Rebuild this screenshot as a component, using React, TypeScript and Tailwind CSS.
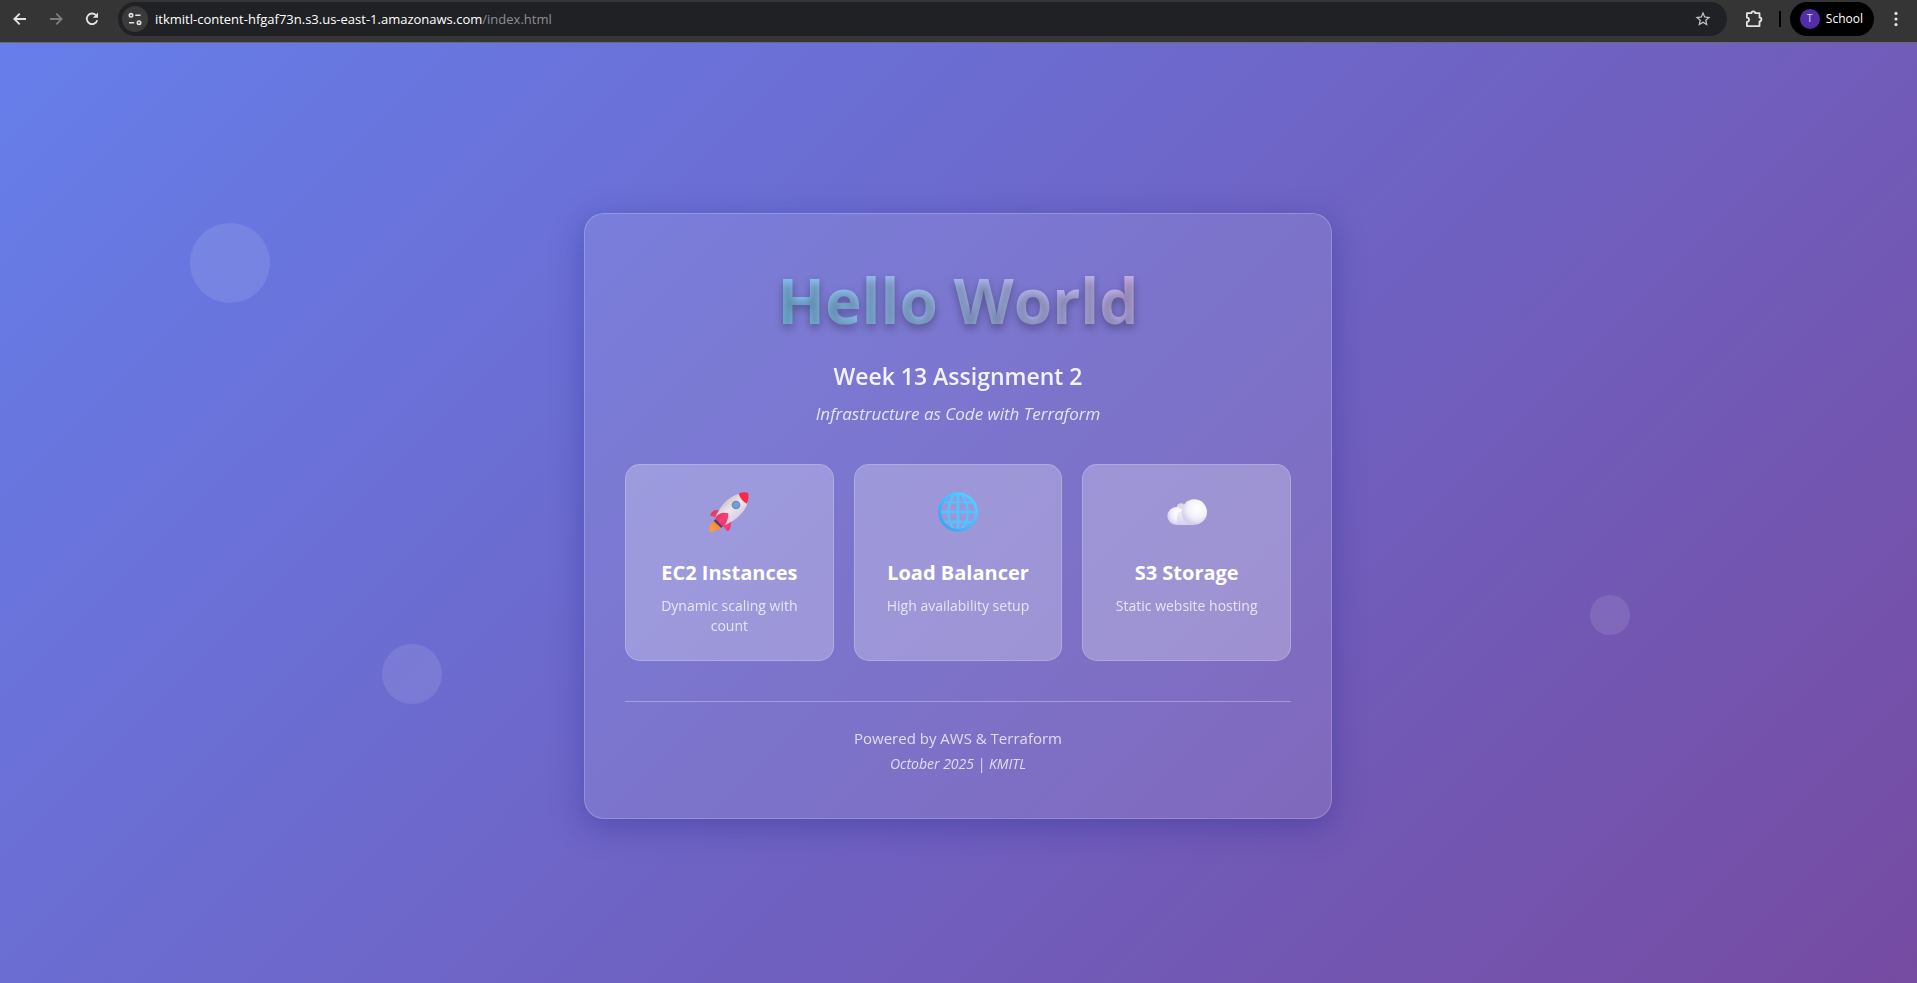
import React from 'react';

const uiFont = "font-['Open_Sans','Noto_Sans',sans-serif]";

function ArrowIcon({ flip = false }: { flip?: boolean }) {
  return (
    <svg viewBox="0 0 18 18" className="size-[18px]" fill="none" stroke="currentColor" strokeWidth="1.8">
      {flip ? <path d="M3 9h11.5M9.3 3.6 14.7 9l-5.4 5.4" /> : <path d="M15 9H3.5M8.7 3.6 3.3 9l5.4 5.4" />}
    </svg>
  );
}

function ReloadIcon() {
  return (
    <svg viewBox="0 0 18 18" className="size-[18px]">
      <path d="M14.2 10.2A5.3 5.3 0 1 1 12.9 5.1" fill="none" stroke="currentColor" strokeWidth="1.8" />
      <path d="M15 2.6v5.2H9.8z" fill="currentColor" />
    </svg>
  );
}

function TuneIcon() {
  return (
    <svg viewBox="0 0 16 16" className="size-4" fill="none" stroke="currentColor" strokeWidth="1.6">
      <circle cx="4" cy="4.3" r="1.7" />
      <path d="M8.3 4.3h5.2M2 11.7h5.2" />
      <circle cx="12" cy="11.7" r="1.7" />
    </svg>
  );
}

function StarIcon() {
  return (
    <svg viewBox="0 0 24 24" className="size-[18px]" fill="currentColor">
      <path d="m22 9.24-7.19-.62L12 2 9.19 8.63 2 9.24l5.46 4.73L5.82 21 12 17.27 18.18 21l-1.63-7.03L22 9.24zM12 15.4l-3.76 2.27 1-4.28-3.32-2.88 4.38-.38L12 6.1l1.71 4.04 4.38.38-3.32 2.88 1 4.28L12 15.4z" />
    </svg>
  );
}

function PuzzleIcon() {
  return (
    <svg viewBox="0 0 20 20" className="size-5" fill="none" stroke="currentColor" strokeWidth="1.8" strokeLinejoin="round">
      <path d="M2.9 4.2h4.5a1.9 1.9 0 0 1 3.8 0h4.3v4.3a1.9 1.9 0 0 1 0 3.8v4.8H2.9v-4.3a2.1 2.1 0 0 0 0-4.2z" />
    </svg>
  );
}

function Toolbar() {
  return (
    <header className="flex items-center border-b border-[#6b6b6b] bg-[#353535] pt-0.5 pr-[3px] pb-[6px] pl-0.5 text-[#e3e3e3]">
      <button aria-label="Back" className="flex h-[34px] w-9 items-center justify-center"><ArrowIcon /></button>
      <button aria-label="Forward" className="flex h-[34px] w-9 items-center justify-center text-[#7d7d7d]"><ArrowIcon flip /></button>
      <button aria-label="Reload" className="flex h-[34px] w-9 items-center justify-center"><ReloadIcon /></button>
      <div className="ml-2 flex h-[34px] flex-1 items-center rounded-full bg-[#202124] pr-[15px] pl-1">
        <button aria-label="View site information" className="flex size-[26px] items-center justify-center rounded-full bg-[#3a3a3b]">
          <TuneIcon />
        </button>
        <p className="ml-[7px] flex-1 text-[13px] leading-5 text-white">
          itkmitl-content-hfgaf73n.s3.us-east-1.amazonaws.com<span className="text-[#8c8f93]">/index.html</span>
        </p>
        <button aria-label="Bookmark this tab" className="text-[#c7c7c7]"><StarIcon /></button>
      </div>
      <button aria-label="Extensions" className="ml-[9px] flex h-[34px] w-9 items-center justify-center"><PuzzleIcon /></button>
      <span className="ml-[7px] h-4 w-0.5 bg-black" />
      <button className="ml-[9px] flex h-[34px] items-center gap-[6px] rounded-full bg-black pr-[11px] pl-2.5 text-xs text-white">
        <span className="flex size-5 items-center justify-center rounded-full bg-[#512da8] text-[10px] text-[#e0d6f5]">T</span>
        School
      </button>
      <button aria-label="Menu" className="ml-1 flex h-[34px] w-9 items-center justify-center">
        <svg viewBox="0 0 18 18" className="size-[18px]" fill="currentColor">
          <circle cx="9" cy="3.4" r="1.6" />
          <circle cx="9" cy="9" r="1.6" />
          <circle cx="9" cy="14.6" r="1.6" />
        </svg>
      </button>
    </header>
  );
}

function Rocket() {
  return (
    <svg viewBox="0 0 120 120" className="size-10">
      <defs>
        <linearGradient id="hull" x1="0.25" y1="0.2" x2="0.75" y2="0.8">
          <stop offset="0" stopColor="#c9bfc9" />
          <stop offset="0.45" stopColor="#eee6ee" />
          <stop offset="1" stopColor="#d8c8e0" />
        </linearGradient>
        <linearGradient id="fin" x1="0" y1="0" x2="1" y2="1">
          <stop offset="0" stopColor="#c93a60" />
          <stop offset="0.5" stopColor="#fb3d72" />
          <stop offset="1" stopColor="#f4287e" />
        </linearGradient>
        <linearGradient id="flame" x1="0" y1="1" x2="1" y2="0">
          <stop offset="0" stopColor="#ffa43a" />
          <stop offset="1" stopColor="#ef7d2c" />
        </linearGradient>
      </defs>
      <path d="M2 118C-1 103 5 91 20 85L39 104C34 114 24 112 18 116 12 119 7 119 2 118z" fill="url(#flame)" />
      <path d="M21 80 14 87 37 108 44 100z" fill="#44407f" />
      <path d="M5 66Q11 54 24 54L42 56 24 82Q14 72 5 72z" fill="url(#fin)" />
      <path d="M68 82 65 103Q64 113 57 118 52 116 43 101z" fill="url(#fin)" />
      <path d="M91 5C62 12 34 38 19 77L43 101C80 87 109 60 116 31z" fill="url(#hull)" />
      <path d="M89 5Q102-1 117 2 121 16 114 35 96 26 89 5z" fill="#f42a48" />
      <path d="M19 80C22 66 41 58 58 64 58 83 51 97 42 105z" fill="url(#fin)" />
      <circle cx="81" cy="39" r="13" fill="#8b8294" />
      <circle cx="81" cy="39" r="9" fill="#5aa6f8" />
    </svg>
  );
}

function Globe() {
  return (
    <svg viewBox="0 0 120 120" className="size-10" fill="none">
      <defs>
        <linearGradient id="rim" x1="0" y1="1" x2="1" y2="0">
          <stop offset="0" stopColor="#3d9cec" />
          <stop offset="0.5" stopColor="#45bcfc" />
          <stop offset="1" stopColor="#5ad4ff" />
        </linearGradient>
      </defs>
      <g stroke="#50c6ff" strokeWidth="7">
        <ellipse cx="60" cy="60" rx="29" ry="54" />
        <path d="M60 5v110" strokeWidth="8" />
        <path d="M5 60h110" strokeWidth="8" />
        <path d="M16 31h88M16 90h88" />
      </g>
      <circle cx="60" cy="60" r="55" stroke="url(#rim)" strokeWidth="9" />
    </svg>
  );
}

function Cloud() {
  return (
    <svg viewBox="0 0 120 120" className="size-10">
      <defs>
        <radialGradient id="puff" cx="0.62" cy="0.35" r="0.7">
          <stop offset="0" stopColor="#ffffff" />
          <stop offset="0.55" stopColor="#f3f1f8" />
          <stop offset="1" stopColor="#cfc8ea" />
        </radialGradient>
        <linearGradient id="base" x1="0" y1="0" x2="0" y2="1">
          <stop offset="0" stopColor="#f0eef6" />
          <stop offset="1" stopColor="#d6cfef" />
        </linearGradient>
      </defs>
      <circle cx="42" cy="47" r="13" fill="#dcd9e0" />
      <circle cx="28" cy="72" r="27" fill="url(#puff)" />
      <path d="M32 60h50v39H28z" fill="url(#base)" />
      <circle cx="82" cy="60" r="38" fill="url(#puff)" />
    </svg>
  );
}

const features = [
  { icon: <Rocket />, title: 'EC2 Instances', text: 'Dynamic scaling with count' },
  { icon: <Globe />, title: 'Load Balancer', text: 'High availability setup' },
  { icon: <Cloud />, title: 'S3 Storage', text: 'Static website hosting' },
];

export default function App() {
  return (
    <div className={`flex min-h-screen flex-col ${uiFont}`}>
      <Toolbar />
      <main className="relative flex flex-1 items-center justify-center overflow-hidden bg-[linear-gradient(135deg,#667eea_0%,#764ba2_100%)] pt-[6px] pr-px">
        <span className="absolute top-[180px] left-[9.9%] size-20 rounded-full bg-white/10" />
        <span className="absolute top-[552px] right-[14.95%] size-10 rounded-full bg-white/10" />
        <span className="absolute top-[601px] left-[19.95%] size-[60px] rounded-full bg-white/10" />
        <section className="w-full max-w-[748px] rounded-[20px] border border-white/20 bg-white/10 px-10 pt-10 pb-[42px] text-center text-white shadow-[0_8px_32px_rgba(31,38,135,0.37)]">
          <h1 className="bg-[linear-gradient(45deg,#5ccff2,#eea9f0)] bg-clip-text pt-0.5 text-[62px] leading-[88px] font-bold text-transparent [text-shadow:0_4px_8px_rgba(0,0,0,0.3)]">
            Hello World
          </h1>
          <h2 className="mt-4 text-[23px] leading-8 font-semibold opacity-90">Week 13 Assignment 2</h2>
          <p className="mt-2 text-[17px] leading-7 italic opacity-80">Infrastructure as Code with Terraform</p>
          <div className="mt-9 grid grid-cols-3 gap-5">
            {features.map((f) => (
              <article key={f.title} className="rounded-[15px] border border-white/20 bg-white/25 px-6 pt-[23px] pb-6">
                <div className="flex h-12 items-center justify-center">{f.icon}</div>
                <h3 className="mt-[23px] text-xl leading-7 font-bold whitespace-nowrap">{f.title}</h3>
                <p className="mt-[9px] text-sm leading-5 opacity-75">{f.text}</p>
              </article>
            ))}
          </div>
          <footer className="mt-10 border-t border-white/30 pt-6">
            <p className="text-[15px] leading-6 opacity-75">Powered by AWS &amp; Terraform</p>
            <p className="mt-0.5 text-sm leading-6 italic opacity-75">October 2025 | KMITL</p>
          </footer>
        </section>
      </main>
    </div>
  );
}
